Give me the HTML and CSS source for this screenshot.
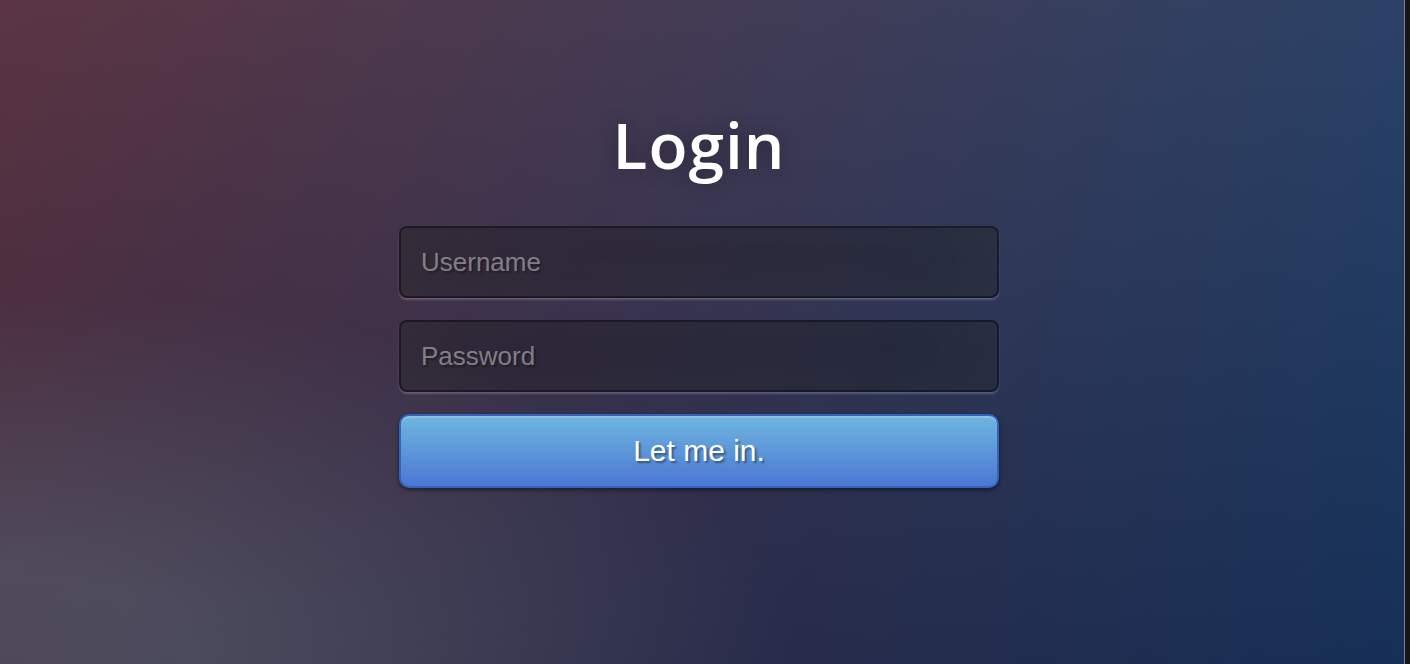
FILE: index.html
```html
<!DOCTYPE html>
<html lang="en">
<head>
<meta charset="utf-8">
<title>Login</title>
<link rel="stylesheet" href="styles.css">
</head>
<body>
<main class="page">
  <div class="login">
    <h1 class="title">Login</h1>
    <form class="form">
      <input class="field" type="text" name="u" placeholder="Username">
      <input class="field" type="password" name="p" placeholder="Password">
      <button class="btn" type="submit">Let me in.</button>
    </form>
  </div>
</main>
<div class="edge"></div>
</body>
</html>
```

FILE: styles.css
```css
* { box-sizing: border-box; }
html, body { margin: 0; height: 100%; }
body {
  display: flex;
  width: 1410px;
  height: 664px;
  overflow: hidden;
  background: #111;
}
.page {
  flex: 1;
  padding-right: 6px;
  background:
    radial-gradient(ellipse farthest-corner at 0% 100%, rgba(104,128,138,.4) 10%, rgba(138,114,76,0) 40%),
    linear-gradient(to bottom, rgba(57,173,219,.25) 0%, rgba(42,60,87,.4) 100%),
    linear-gradient(135deg, #670d10 0%, #092756 100%);
  display: flex;
  justify-content: center;
}
.edge {
  width: 6px;
  border-left: 1px solid #7a80a6;
  background: #161618;
}
.login {
  width: 600px;
  padding-top: 106px;
}
.title {
  margin: 0 0 43px;
  font-family: "Open Sans", "Noto Sans", sans-serif;
  font-weight: 600;
  font-size: 64px;
  line-height: 77px;
  letter-spacing: 1px;
  color: #fff;
  text-align: center;
  text-shadow: 0 0 20px rgba(0,0,0,.3);
}
.form { display: flex; flex-direction: column; }
.field {
  display: block;
  width: 100%;
  height: 72px;
  margin: 0 0 22px;
  padding: 0 20px;
  font-family: "Liberation Sans", Arial, sans-serif;
  font-size: 26px;
  color: #fff;
  background: rgba(0,0,0,.3);
  border: 2px solid rgba(0,0,0,.3);
  border-radius: 8px;
  outline: none;
  text-shadow: 2px 2px 2px rgba(0,0,0,.3);
  box-shadow: inset 0 -10px 90px rgba(100,100,100,.2), 0 2px 2px rgba(255,255,255,.2);
}
.field::placeholder { color: rgba(255,255,255,.42); }
.btn {
  display: block;
  width: 100%;
  height: 74px;
  padding: 0 28px;
  font-family: "Liberation Sans", Arial, sans-serif;
  font-size: 30px;
  color: #fff;
  text-shadow: 2px 2px 2px rgba(0,0,0,.4);
  background-color: #4a77d4;
  background-image: linear-gradient(to bottom, #6eb6de, #4a77d4);
  border: 2px solid #3762bc;
  border-radius: 10px;
  box-shadow: inset 0 2px 0 rgba(255,255,255,.2), 0 2px 4px rgba(0,0,0,.5);
  cursor: pointer;
}
```
